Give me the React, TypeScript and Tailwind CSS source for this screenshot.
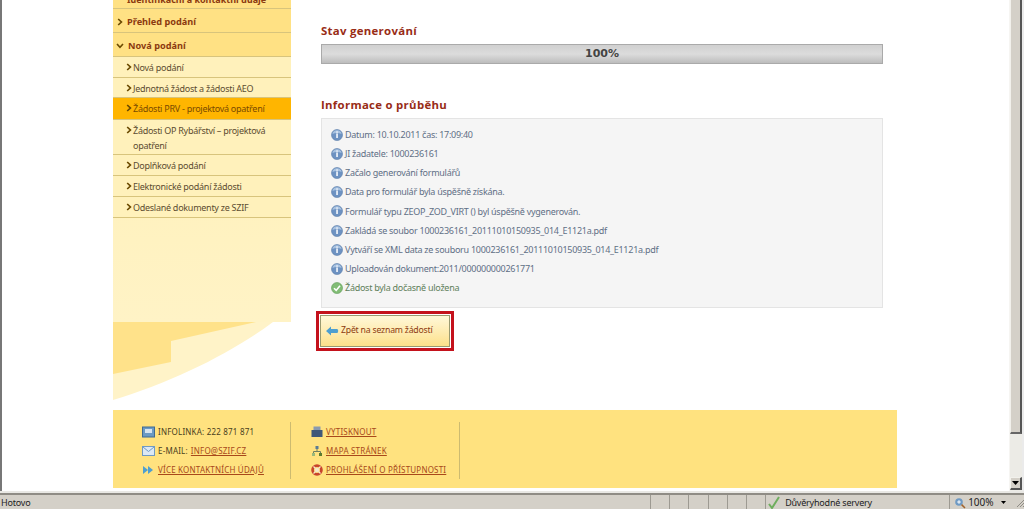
import React from 'react'

const menuTop = ['Přehled podání', 'Nová podání']

const subItems = [
   { label: 'Nová podání', h: 'h-[21px]' },
   { label: 'Jednotná žádost a žádosti AEO', h: 'h-[20px]' },
   { label: 'Žádosti PRV - projektová opatření', h: 'h-[22px]', active: true },
   { label: 'Žádosti OP Rybářství – projektová opatření', h: 'h-[35px]' },
   { label: 'Doplňková podání', h: 'h-[21px]' },
   { label: 'Elektronické podání žádosti', h: 'h-[21px]' },
   { label: 'Odeslané dokumenty ze SZIF', h: 'h-[21px]' },
]

const logLines = [
   'Datum: 10.10.2011 čas: 17:09:40',
   'JI žadatele: 1000236161',
   'Začalo generování formulářů',
   'Data pro formulář byla úspěšně získána.',
   'Formulář typu ZEOP_ZOD_VIRT () byl úspěšně vygenerován.',
   'Zakládá se soubor 1000236161_20111010150935_014_E1121a.pdf',
   'Vytváří se XML data ze souboru 1000236161_20111010150935_014_E1121a.pdf',
   'Uploadován dokument:2011/000000000261771',
]

const Chevron = ({ className = '' }: { className?: string }) => (
   <svg width="6" height="8" viewBox="0 0 6 8" className={className}>
      <path d="M1.2 1 4.4 4 1.2 7" fill="none" stroke="#6b4a00" strokeWidth="1.7" />
   </svg>
)

const InfoIcon = () => (
   <svg width="12" height="12" viewBox="0 0 12 12" className="shrink-0">
      <circle cx="6" cy="6" r="5.5" fill="#6d92c2" stroke="#5a7ca8" strokeWidth=".6" />
      <path d="M1.4 5A4.7 4.7 0 0 1 10.6 5C8 3.8 4 3.8 1.4 5Z" fill="#a8c2e0" />
      <rect x="5.2" y="4.4" width="1.7" height="4.6" fill="#eef3fa" />
      <rect x="5.2" y="2.4" width="1.7" height="1.3" fill="#eef3fa" />
   </svg>
)

const OkIcon = () => (
   <svg width="12" height="12" viewBox="0 0 12 12" className="shrink-0">
      <circle cx="6" cy="6" r="5.5" fill="#82bd76" stroke="#5f9c58" strokeWidth=".6" />
      <path d="M3 6.2 5.2 8.4 9 3.8" fill="none" stroke="#fff" strokeWidth="1.6" />
   </svg>
)

const Sidebar = () => (
   <aside className="w-[178px] h-[400px] shrink-0 bg-white relative overflow-hidden font-['Noto_Sans',sans-serif]">
      <div className="h-[322px] bg-gradient-to-b from-[#ffefb2] to-[#fff3c6]">
         <div className="h-[9px] bg-[#ffe184] border-b border-[#d8c47c] pl-[14px] text-[9px] leading-[5px] font-bold text-[#8c3a10] overflow-hidden">
            <span className="block mt-[-3px] whitespace-nowrap">Identifikační a kontaktní údaje</span>
         </div>
         {menuTop.map((label, i) => (
            <div
               key={label}
               className="h-[24px] bg-[#ffe184] border-b border-[#d8c47c] flex items-center pl-[4px] pt-[2px] text-[9.2px] font-bold text-[#8c3a10]"
            >
               {i === 1 ? (
                  <svg width="8" height="6" viewBox="0 0 8 6" className="ml-[-1px] mr-[1px]">
                     <path d="M1 1 4 4.4 7 1" fill="none" stroke="#6b4a00" strokeWidth="1.6" />
                  </svg>
               ) : (
                  <Chevron className="mr-[1px]" />
               )}
               <span className="ml-[3px]">{label}</span>
            </div>
         ))}
         {subItems.map((item) => (
            <div
               key={item.label}
               className={`${item.h} border-b border-[#d8c47c] flex items-start gap-[1px] pl-[13px] pr-2 text-[9px] tracking-[-.27px] leading-[15px] pt-[2px] ${
                  item.active ? 'bg-[#ffb500] text-[#7a4a00]' : 'bg-[#fff1bb] text-[#5c4c30]'
               }`}
            >
               <Chevron className="mt-[4px] shrink-0" />
               <span className="w-[145px] mt-[1px]">{item.label}</span>
            </div>
         ))}
      </div>
      {/* paper fold under the menu */}
      <svg width="178" height="78" viewBox="0 0 178 78" className="absolute left-0 top-[322px]">
         <path d="M0 0H160C120 30 60 60 0 78Z" fill="#fff3c8" />
         <path d="M0 0H143L58 19V40L0 52Z" fill="#ffe28a" />
      </svg>
   </aside>
)

const Main = () => (
   <main className="w-[562px] ml-[30px] pt-[22px] font-['Noto_Sans',sans-serif]">
      <h2 className="text-[11.4px] leading-[18px] font-bold text-[#982c16] font-['Open_Sans',sans-serif] tracking-[.3px]">
         Stav generování
      </h2>
      <div className="mt-[4px] h-[20px] border border-[#aaa] bg-gradient-to-b from-[#d0d0d0] via-[#dcdcdc] to-[#bdbdbd] text-center text-[11px] leading-[18px] font-bold text-[#444] font-['DejaVu_Sans',sans-serif]">
         100%
      </div>
      <h2 className="mt-[32px] text-[11.4px] leading-[18px] font-bold text-[#982c16] font-['Open_Sans',sans-serif] tracking-[.3px]">
         Informace o průběhu
      </h2>
      <div className="mt-[4px] h-[190px] border border-[#e4e4e4] bg-[#f5f5f5] pl-[9px] pt-[6px] flex flex-col text-[9px] tracking-[-.27px] text-[#5f6f85]">
         {logLines.map((line) => (
            <div key={line} className="h-[19.2px] flex items-center gap-[2px]">
               <InfoIcon />
               <span>{line}</span>
            </div>
         ))}
         <div className="h-[19.2px] flex items-center gap-[2px] text-[#5e7f5a]">
            <OkIcon />
            <span>Žádost byla dočasně uložena</span>
         </div>
      </div>
      <div className="mt-[3px] ml-[-5px] w-[138px] h-[40px] border-[3px] border-[#c4121c] p-[1px]">
         <div className="h-full border border-[#9a9a70] bg-gradient-to-b from-[#fff8d8] to-[#fde08a] flex items-center pl-[5px] gap-[2px] text-[8.7px] tracking-[-.2px] text-[#8c3a10]">
            <svg width="13" height="10" viewBox="0 0 13 10">
               <path d="M0 5 5 .6V3H11.5Q13 5 11.5 7H5V9.4Z" fill="#4e9fd0" />
            </svg>
            <span>Zpět na seznam žádostí</span>
         </div>
      </div>
   </main>
)

const Footer = () => (
   <footer className="ml-[113px] w-[784px] h-[78px] bg-[#ffe27f] flex pt-[12px] font-['Noto_Sans',sans-serif] text-[8px] text-[#4a4020] tracking-[.2px]">
      <div className="ml-[29px] w-[149px] h-[57px] border-r border-[#cdbb70] flex flex-col pt-[1px]">
         <div className="h-[19.5px] flex items-center gap-[3px]">
            <svg width="13" height="12" viewBox="0 0 13 12">
               <rect x=".5" y="1" width="12" height="10" fill="#6b9ac4" stroke="#3e6a94" />
               <rect x="3" y="3" width="7" height="4" fill="#d6e4f0" />
            </svg>
            INFOLINKA: 222 871 871
         </div>
         <div className="h-[19.5px] flex items-center gap-[3px]">
            <svg width="13" height="10" viewBox="0 0 13 10">
               <rect x=".5" y=".5" width="12" height="9" fill="#dce8f4" stroke="#6f9ac4" />
               <path d="M1 1 6.5 5.5 12 1" fill="none" stroke="#6f9ac4" />
            </svg>
            E-MAIL: <span className="underline text-[#a8481a]">INFO@SZIF.CZ</span>
         </div>
         <div className="h-[19.5px] flex items-center gap-[3px]">
            <svg width="13" height="10" viewBox="0 0 13 10">
               <path d="M1 1 6 5 1 9ZM6 1 11 5 6 9Z" fill="#4e9fd0" />
            </svg>
            <span className="underline text-[#a8481a]">VÍCE KONTAKTNÍCH ÚDAJŮ</span>
         </div>
      </div>
      <div className="pl-[20px] w-[169px] h-[57px] border-r border-[#cdbb70] flex flex-col pt-[1px] text-[#a8481a]">
         <div className="h-[19.5px] flex items-center gap-[3px]">
            <svg width="12" height="12" viewBox="0 0 12 12">
               <rect x="2.5" y=".5" width="7" height="4" fill="#8a9ab0" />
               <rect x=".5" y="4" width="11" height="7" fill="#3f5878" />
            </svg>
            <span className="underline">VYTISKNOUT</span>
         </div>
         <div className="h-[19.5px] flex items-center gap-[3px]">
            <svg width="12" height="12" viewBox="0 0 12 12">
               <rect x="4.5" y="1" width="3" height="3" fill="#5b7c95" />
               <rect x="1" y="8" width="3" height="3" fill="#9ab87a" />
               <rect x="8" y="8" width="3" height="3" fill="#5c7a2e" />
               <path d="M6 4V6.5M2.5 8V6.5H9.5V8" fill="none" stroke="#6f7f60" />
            </svg>
            <span className="underline">MAPA STRÁNEK</span>
         </div>
         <div className="h-[19.5px] flex items-center gap-[3px]">
            <svg width="12" height="12" viewBox="0 0 12 12">
               <circle cx="6" cy="6" r="4.4" fill="none" stroke="#c8452c" strokeWidth="2.8" />
               <path d="M2.5 2.5 4.5 4.5M9.5 2.5 7.5 4.5M2.5 9.5 4.5 7.5M9.5 9.5 7.5 7.5" stroke="#f4e8d0" strokeWidth="1.2" />
               <circle cx="6" cy="6" r="2" fill="#f4e8d0" />
            </svg>
            <span className="underline">PROHLÁŠENÍ O PŘÍSTUPNOSTI</span>
         </div>
      </div>
   </footer>
)

const Scrollbar = () => (
   <div className="w-[15px] h-[491px] shrink-0 flex">
      <div className="w-[13px] h-full bg-[#ecebe6] border-l border-[#f6f5f2] flex flex-col justify-between">
         <div className="h-[434px] bg-[#d4d0c8] border-l border-[#f2f1ec] border-r-2 border-b-2 border-r-[#555] border-b-[#666]" />
         <div className="h-[13px] mb-[1px] bg-[#d4d0c8] border-l border-t border-[#f2f1ec] border-r-2 border-b-2 border-r-[#555] border-b-[#555] flex items-center justify-center">
            <svg width="7" height="4" viewBox="0 0 7 4">
               <path d="M0 0H7L3.5 4Z" fill="#000" />
            </svg>
         </div>
      </div>
      <div className="w-[2px] h-full bg-[#ebebeb]" />
   </div>
)

const Separators = () => (
   <>
      {[0, 1, 2, 3, 4, 5].map((i) => (
         <div key={i} className="w-[19.2px] shrink-0 h-full border-l border-[#9d9a92]" />
      ))}
   </>
)

const StatusBar = () => (
   <div className="h-[18px] bg-[#9d9a92] flex flex-col font-['Noto_Sans',sans-serif]">
      <div className="h-[2px] bg-[#e9e8e4] shrink-0" />
      <div className="h-[2px] bg-[#8f8c85] shrink-0" />
      <div className="flex-1 bg-[#d4d0c8] flex items-center text-[9px] tracking-[-.2px] text-[#222]">
         <div className="pl-[1px] w-[650px] shrink-0">Hotovo</div>
         <Separators />
         <div className="w-[184px] shrink-0 h-full border-l border-[#9d9a92] flex items-center gap-[5px] pl-[2px]">
            <svg width="12" height="13" viewBox="0 0 12 13">
               <path d="M1 8 4 12 11 1" fill="none" stroke="#6fae5e" strokeWidth="2" />
            </svg>
            Důvěryhodné servery
         </div>
         <div className="w-[75px] shrink-0 h-full border-l border-[#9d9a92] flex items-center pl-[4px]">
            <svg width="12" height="12" viewBox="0 0 12 12" className="shrink-0">
               <circle cx="5" cy="5" r="3.8" fill="#6f9ac4" />
               <path d="M3.2 5H6.8M5 3.2V6.8" stroke="#fff" strokeWidth="1" />
               <path d="M7.6 7.6 11 11" stroke="#a0622a" strokeWidth="1.5" />
            </svg>
            <span className="w-[24px] shrink-0 ml-[2px] text-[10px] tracking-normal">100%</span>
            <svg width="5" height="3" viewBox="0 0 5 3" className="ml-[9px] shrink-0">
               <path d="M0 0H5L2.5 3Z" fill="#000" />
            </svg>
            <svg width="8" height="8" viewBox="0 0 8 8" className="ml-[10px] shrink-0">
               <path d="M1 8 8 1M4 8 8 4M7 8 8 7" stroke="#8f8c85" strokeWidth="1" />
            </svg>
         </div>
      </div>
   </div>
)

const App = () => {
   return (
      <div className="w-[1024px] h-[509px] overflow-hidden bg-white flex flex-col">
         <div className="flex h-[491px]">
            <div className="w-[2px] bg-[#777] shrink-0" />
            <div className="flex-1">
               <div className="flex ml-[111px] h-[410px]">
                  <Sidebar />
                  <Main />
               </div>
               <div className="ml-[-2px]">
                  <Footer />
               </div>
            </div>
            <Scrollbar />
         </div>
         <StatusBar />
      </div>
   )
}

export default App
